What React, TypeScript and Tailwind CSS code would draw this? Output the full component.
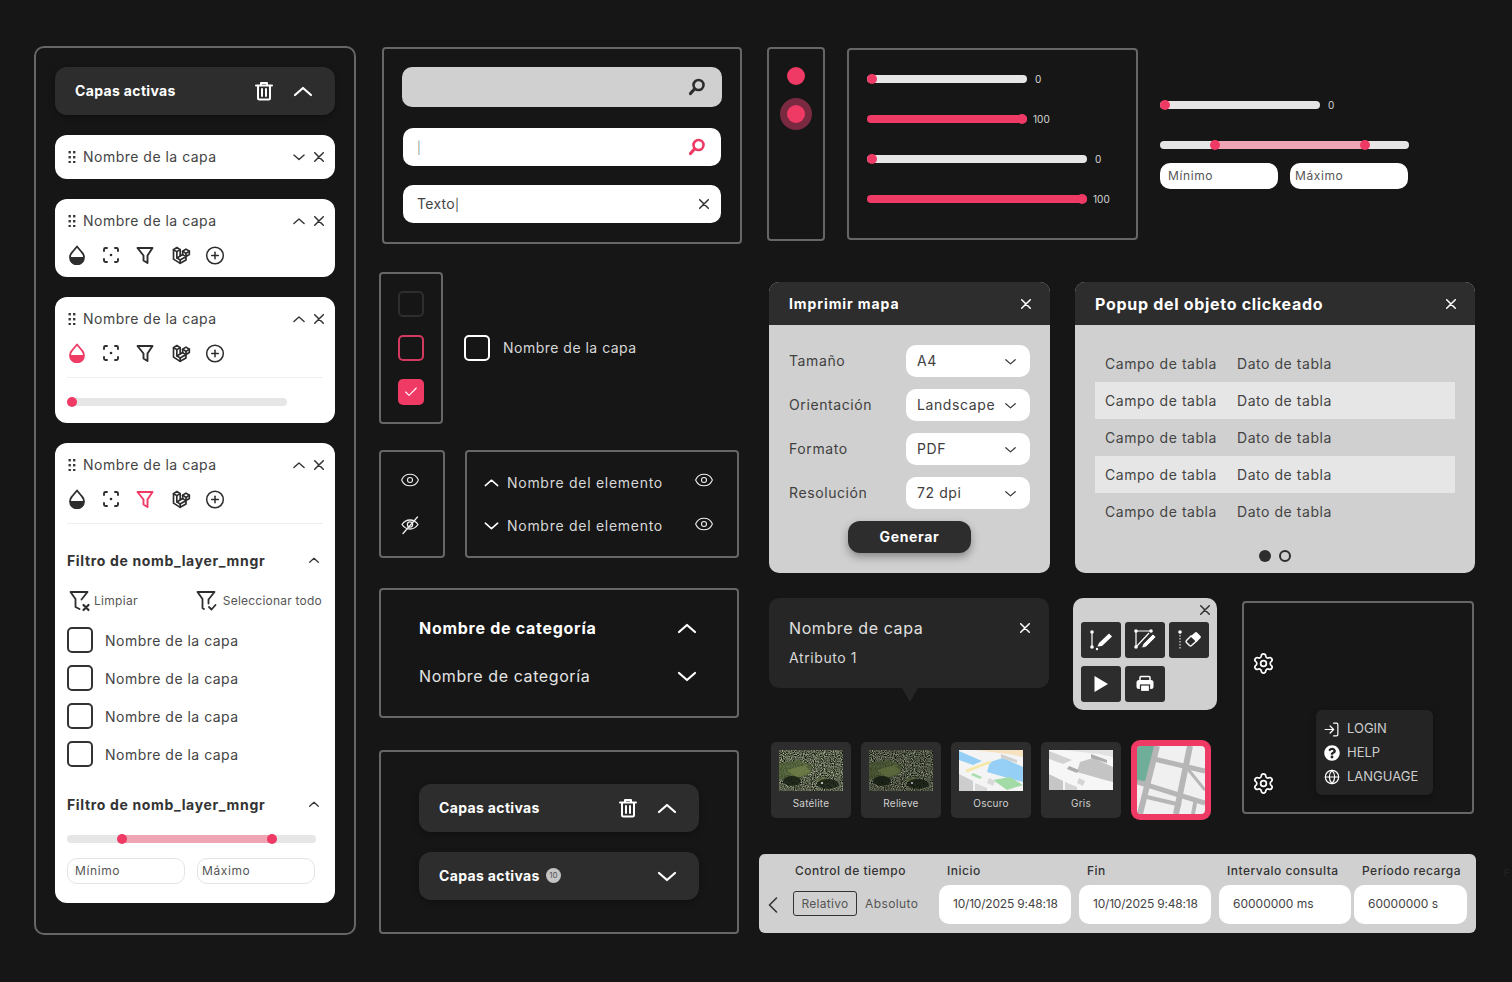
import React from "react";
import { CirclePlus, Eye, Settings, LogIn, Globe, Check } from "lucide-react";
import { TbBrandLaravel } from "react-icons/tb";
import { FaQuestionCircle } from "react-icons/fa";

const Frame = ({ className = "", children }: { className?: string; children?: React.ReactNode }) => (
  <div className={`border-2 border-[#666666] rounded-[4px] shrink-0 ${className}`}>{children}</div>
);

const CloseX = ({ size = 10, color = "#333333", sw = 1.5 }: { size?: number; color?: string; sw?: number }) => (
  <svg width={size} height={size} viewBox={`0 0 ${size} ${size}`} fill="none" stroke={color} strokeWidth={sw} strokeLinecap="round" className="shrink-0">
    <path d={`M0.7 0.7L${size - 0.7} ${size - 0.7}M${size - 0.7} 0.7L0.7 ${size - 0.7}`} />
  </svg>
);
const Trash = () => (
  <svg width="20" height="20" viewBox="0 0 20 20" fill="none" stroke="white" strokeWidth="2" strokeLinecap="round" strokeLinejoin="round">
    <path d="M2 4.5h16M7 4.5V2h6v2.5M4 4.5V17a1.5 1.5 0 0 0 1.5 1.5h9A1.5 1.5 0 0 0 16 17V4.5M8 8v7M12 8v7" />
  </svg>
);
const Chev = ({ up, size = 22, color = "white", sw = 2.2 }: { up?: boolean; size?: number; color?: string; sw?: number }) => (
  <svg width={size} height={size} viewBox="0 0 22 22" fill="none" stroke={color} strokeWidth={sw} strokeLinecap="round" strokeLinejoin="round" className="shrink-0">
    {up ? <path d="M3 15l8-7 8 7" /> : <path d="M3 8l8 7 8-7" />}
  </svg>
);
const Grip = () => (
  <svg width="8" height="12" viewBox="0 0 8 12" fill="#3a3a3a">
    {[1, 6, 11].map((y) => (
      <React.Fragment key={y}>
        <rect x="0.5" y={y - 1} width="2.4" height="2.4" />
        <rect x="5" y={y - 1} width="2.4" height="2.4" />
      </React.Fragment>
    ))}
  </svg>
);
const Drop = ({ color = "#2d2d2d" }: { color?: string }) => (
  <svg width="18" height="20" viewBox="0 0 18 20" fill="none">
    <path d="M9 1.5l5 6A7 7 0 1 1 4 7.5z" stroke={color} strokeWidth="1.8" strokeLinejoin="round" />
    <path d="M2 12h14a7 7 0 0 1-14 0z" fill={color} />
  </svg>
);
const FocusIcon = () => (
  <svg width="18" height="18" viewBox="0 0 18 18" fill="none" stroke="#2d2d2d" strokeWidth="1.9" strokeLinecap="round">
    <path d="M2 5V3.5A1.5 1.5 0 0 1 3.5 2H5M13 2h1.5A1.5 1.5 0 0 1 16 3.5V5M16 13v1.5a1.5 1.5 0 0 1-1.5 1.5H13M5 16H3.5A1.5 1.5 0 0 1 2 14.5V13" />
    <circle cx="9" cy="9" r="1.3" fill="#2d2d2d" stroke="none" />
  </svg>
);
const Funnel = ({ color = "#2d2d2d", size = 18 }: { color?: string; size?: number }) => (
  <svg width={size} height={size} viewBox="0 0 18 18" fill="none" stroke={color} strokeWidth="1.9" strokeLinejoin="round">
    <path d="M1.5 2h15l-5 7.5V17l-4-2.5v-5z" />
  </svg>
);
const FilterX = () => (
  <svg width="22" height="22" viewBox="0 0 22 22" fill="none" stroke="#2d2d2d" strokeWidth="1.8" strokeLinejoin="round" strokeLinecap="round" className="shrink-0">
    <path d="M1.5 2h17l-6 7.5M6.5 9L1.5 2M6.5 9v8l4 2" />
    <path d="M14.5 15l5 5M19.5 15l-5 5" strokeWidth="2.2" />
  </svg>
);
const FilterCheck = () => (
  <svg width="22" height="22" viewBox="0 0 22 22" fill="none" stroke="#2d2d2d" strokeWidth="1.8" strokeLinejoin="round" strokeLinecap="round" className="shrink-0">
    <path d="M1.5 2h17l-6 7.5v4M6.5 9L1.5 2M6.5 9v9l1.5 1" />
    <path d="M13 17l2.5 2.5 4-4.5" />
  </svg>
);
const Toolbar = ({ dropColor, funnelColor }: { dropColor?: string; funnelColor?: string }) => (
  <div className="flex items-center h-5 pl-[13px]">
    <div className="w-[18px] flex justify-center"><Drop color={dropColor} /></div>
    <div className="w-[18px] ml-[16px] flex justify-center"><FocusIcon /></div>
    <div className="w-[18px] ml-[16px] flex justify-center"><Funnel color={funnelColor} /></div>
    <div className="w-[20px] ml-[17px] flex justify-center"><TbBrandLaravel size={22} color="#2d2d2d" /></div>
    <div className="w-[20px] ml-[14px] flex justify-center"><CirclePlus size={21} color="#2d2d2d" strokeWidth={1.8} /></div>
  </div>
);
const CardHead = ({ open }: { open?: boolean }) => (
  <div className="flex items-center h-[44px] pl-[13px] pr-[11px]">
    <Grip />
    <span className="ml-[7px] text-[14px] text-[#444444] flex-1 tracking-[0.49px] -translate-y-px">Nombre de la capa</span>
    <Chev up={open} size={14} color="#333333" sw={2.2} />
    <div className="ml-[8px]"><CloseX /></div>
  </div>
);
const Slider = ({ w, value, full }: { w: string; value: string; full?: boolean }) => (
  <div className="flex items-center h-[10px]">
    <div className={`relative h-2 rounded-full ${w} ${full ? "bg-[#ee3a64]" : "bg-[#e6e6e6]"}`}>
      <div className={`absolute top-[-1px] size-[10px] rounded-full bg-[#ee3a64] ${full ? "right-0" : "left-0"}`} />
    </div>
    <span className={`text-[10px] text-[#d8d8d8] tracking-normal ${full ? "ml-[6px]" : "ml-[8px]"}`}>{value}</span>
  </div>
);
const Range = ({ w, a, b }: { w: string; a: string; b: string }) => (
  <div className={`relative h-2 rounded-full bg-[#e6e6e6] ${w}`}>
    <div className={`absolute top-0 h-2 bg-[#eea6b5] ${a} ${b}`} />
    <div className={`absolute top-[-1px] size-[10px] -ml-[5px] rounded-full bg-[#ee3a64] ${a}`} />
    <div className={`absolute top-[-1px] size-[10px] -mr-[5px] rounded-full bg-[#ee3a64] ${b}`} />
  </div>
);
const Box = ({ className = "" }: { className?: string }) => <div className={`size-[26px] rounded-[5px] border-2 shrink-0 ${className}`} />;
const Magnifier = ({ color }: { color: string }) => (
  <svg width="18" height="18" viewBox="0 0 18 18" fill="none" stroke={color} strokeLinecap="round" className="shrink-0">
    <circle cx="10.5" cy="7" r="5" strokeWidth="2.6" />
    <path d="M6.5 11l-4 4.5" strokeWidth="3.2" />
  </svg>
);
const EyeOff = () => (
  <svg width="20" height="20" viewBox="0 0 20 20" fill="none" stroke="#eeeeee" strokeWidth="1.3" strokeLinecap="round">
    <path d="M2 9.5C4 6.5 7 5 10 5s6 1.5 8 4.5c-2 3-5 4.5-8 4.5s-6-1.5-8-4.5z" />
    <circle cx="10" cy="9.5" r="2.6" />
    <path d="M3 18.5L17.5 2" />
  </svg>
);
const DarkHeader = ({ badge }: { badge?: boolean }) => (
  <div className="flex items-center h-12 w-[280px] rounded-xl bg-[#2d2d2d] shadow-[0_2px_6px_rgba(0,0,0,0.3)] pl-5 pr-[21px] text-white">
    <span className="text-[14px] font-bold tracking-[0.35px] -translate-y-px">Capas activas</span>
    {badge ? (
      <>
        <span className="ml-[6px] size-[15px] rounded-full bg-[#c4c4c4] text-[#555555] text-[8px] flex items-center justify-center tracking-normal -translate-y-px">10</span>
        <div className="ml-auto"><Chev /></div>
      </>
    ) : (
      <>
        <div className="ml-auto"><Trash /></div>
        <div className="ml-[18px]"><Chev up /></div>
      </>
    )}
  </div>
);
const SelectRow = ({ label, value, mt = "mt-3" }: { label: string; value: string; mt?: string }) => (
  <div className={`flex items-center h-8 ${mt}`}>
    <span className="w-[117px] text-[14px] text-[#404040] -translate-y-px">{label}</span>
    <div className="w-[124px] h-8 rounded-[10px] bg-white flex items-center pl-[11px] pr-[13px] text-[14px] text-[#404040]">
      <span className="flex-1 -translate-y-px">{value}</span>
      <Chev size={13} color="#333333" sw={2} />
    </div>
  </div>
);
const Row = ({ shaded }: { shaded?: boolean }) => (
  <div className={`flex items-center h-[37px] pl-[10px] text-[14px] text-[#444444] tracking-[0.55px] ${shaded ? "bg-[#e6e6e6]" : ""}`}>
    <span className="w-[132px]">Campo de tabla</span>
    <span>Dato de tabla</span>
  </div>
);
const ToolBtn = ({ children }: { children: React.ReactNode }) => (
  <div className="w-10 h-9 rounded-[3px] bg-[#2d2d2d] flex items-center justify-center">{children}</div>
);

const Satellite = ({ id, dim }: { id: string; dim?: boolean }) => (
  <svg width="64" height="41" viewBox="0 0 64 41">
    <defs>
      <filter id={id} x="0" y="0" width="100%" height="100%" colorInterpolationFilters="sRGB">
        <feTurbulence type="fractalNoise" baseFrequency="0.9" numOctaves="2" seed="4" />
        <feColorMatrix type="matrix" values="1.1 0 0 0 -0.2  1.15 0 0 0 -0.2  1 0 0 0 -0.2  0 0 0 0 1" />
      </filter>
    </defs>
    <rect width="64" height="41" fill="#54604a" filter={`url(#${id})`} />
    <path d="M0 13l20-3 14 6-6 10-28 3z" fill="#4f5f33" opacity="0.7" />
    <path d="M8 20l18-5 6 7-14 6z" fill="#76854c" opacity="0.65" />
    <path d="M36 30l8-3 6 3-6 3z" fill="#5d6c3c" opacity="0.7" />
    <ellipse cx="13" cy="31" rx="9" ry="5" fill="#141c10" opacity="0.85" />
    <ellipse cx="49" cy="34" rx="11" ry="5" fill="#141c10" opacity="0.8" />
    <circle cx="43" cy="33" r="1" fill="#e8e8e8" />
    {dim ? <rect width="64" height="41" fill="#000000" opacity="0.14" /> : null}
  </svg>
);
const Oscuro = () => (
  <svg width="64" height="41" viewBox="0 0 64 41">
    <rect width="64" height="41" fill="#f4f4f4" />
    <path d="M0 1L23 11l-9 4-14-5z" fill="#95cff5" />
    <path d="M31 12l13-4 20 9v15l-8-2-28-8z" fill="#95cff5" />
    <path d="M14 0h50v7l-14-3z" fill="#f6e2c0" />
    <path d="M6 20l24-9 3 1.5-25 10z" fill="#f5e8a8" />
    <path d="M34 30l17-3 13 8-16 5z" fill="#a2dba6" />
    <path d="M14 23l9 4-2 2-9-4z" fill="#a9dfae" />
    <path d="M0 24l14 7v10H0z" fill="#cdcdcd" />
    <path d="M16 33l12 5v3H16zM30 28l6 3-2 5-6-3z" fill="#d9d9d9" />
    <path d="M42 4l16 6v3l-16-5z" fill="#d0d0d0" />
  </svg>
);
const Gris = () => (
  <svg width="64" height="40" viewBox="0 0 64 40">
    <rect width="64" height="40" fill="#f6f6f6" />
    <path d="M0 1L23 10l-9 4-14-5z" fill="#d2d2d2" />
    <path d="M31 12l13-4 20 9v15l-8-2-28-8z" fill="#c4c4c4" />
    <path d="M14 0h50v7l-14-3z" fill="#e2e2e2" />
    <path d="M0 24l14 7v9H0z" fill="#c6c6c6" />
    <path d="M16 32l12 5v3H16zM30 28l6 3-2 5-6-3z" fill="#d5d5d5" />
    <path d="M42 4l16 6v3l-16-5zM20 16l10 4-2 3-10-4z" fill="#adadad" />
  </svg>
);
const Thumb = ({ label, children }: { label: string; children: React.ReactNode }) => (
  <div className="w-20 h-[76px] rounded-[5px] bg-[#2d2d2d] flex flex-col items-center pt-2 shrink-0">
    <div className="h-[41px] w-16 overflow-hidden">{children}</div>
    <span className="mt-[5px] text-[10px] text-[#cfcfcf] tracking-[0.2px]">{label}</span>
  </div>
);
const TimeField = ({ label, value, w, ml, lp = "pl-2", ip = "pl-[14px]", tv = "tracking-[-0.2px]" }: { label: string; value: string; w: string; ml: string; lp?: string; ip?: string; tv?: string }) => (
  <div className={`flex flex-col shrink-0 ${w} ${ml}`}>
    <span className={`h-[16px] text-[12px] font-medium leading-[16px] text-[#333333] tracking-[0.5px] whitespace-nowrap ${lp}`}>{label}</span>
    <div className={`mt-[6px] h-[39px] rounded-[10px] bg-white flex items-center text-[12px] text-[#444444] whitespace-nowrap ${tv} ${ip}`}>
      <span className="-translate-y-px">{value}</span>
    </div>
  </div>
);

export default function App() {
  return (
    <div className="relative w-[1512px] h-[982px] overflow-hidden bg-[#161616] flex items-start font-['Inter',sans-serif] tracking-[0.6px]">
      {/* Column 1 */}
      <div className="ml-[34px] mt-[46px] w-[322px] h-[889px] shrink-0 border-2 border-[#666666] rounded-[10px] pt-[19px] pl-[19px]">
        <DarkHeader />
        <div className="mt-5 w-[280px] h-[44px] rounded-xl bg-white"><CardHead /></div>
        <div className="mt-5 w-[280px] h-[78px] rounded-xl bg-white">
          <CardHead open />
          <div className="mt-[2px]"><Toolbar /></div>
        </div>
        <div className="mt-5 w-[280px] h-[126px] rounded-xl bg-white">
          <CardHead open />
          <div className="mt-[2px]"><Toolbar dropColor="#ee3a64" /></div>
          <div className="mt-[14px] mx-3 h-px bg-[#eeeeee]" />
          <div className="mt-[20px] ml-3 w-[220px] h-2 rounded-full bg-[#e6e6e6] relative">
            <div className="absolute top-[-1px] left-0 size-[10px] rounded-full bg-[#ee3a64]" />
          </div>
        </div>
        <div className="mt-5 w-[280px] h-[460px] rounded-xl bg-white">
          <CardHead open />
          <div className="mt-[2px]"><Toolbar funnelColor="#ee3a64" /></div>
          <div className="mt-[14px] mx-3 h-px bg-[#eeeeee]" />
          <div className="mt-[26px] ml-3 flex items-center h-5 pr-[15px]">
            <span className="text-[14px] font-bold text-[#333333] tracking-[0.65px] flex-1">Filtro de nomb_layer_mngr</span>
            <Chev up size={12} color="#333333" sw={2.4} />
          </div>
          <div className="mt-[21px] ml-[14px] flex items-center h-5 pr-[13px]">
            <FilterX />
            <span className="ml-[3px] text-[12px] text-[#555555] tracking-[0.3px]">Limpiar</span>
            <div className="ml-auto"><FilterCheck /></div>
            <span className="ml-[5px] text-[12px] text-[#555555] tracking-[0.22px]">Seleccionar todo</span>
          </div>
          {[0, 1, 2, 3].map((i) => (
            <div key={i} className={`ml-3 flex items-center h-[26px] ${i === 0 ? "mt-[16px]" : "mt-3"}`}>
              <Box className="border-[#333333]" />
              <span className="ml-[12px] text-[14px] text-[#444444] tracking-[0.49px]">Nombre de la capa</span>
            </div>
          ))}
          <div className="mt-[27px] ml-3 flex items-center h-5 pr-[15px]">
            <span className="text-[14px] font-bold text-[#333333] tracking-[0.65px] flex-1">Filtro de nomb_layer_mngr</span>
            <Chev up size={12} color="#333333" sw={2.4} />
          </div>
          <div className="mt-[21px] ml-3"><Range w="w-[249px]" a="left-[55px]" b="right-[44px]" /></div>
          <div className="mt-[15px] ml-3 flex">
            <div className="w-[118px] h-[26px] rounded-[10px] border border-[#e4e4e4] flex items-center pl-[7px] text-[12px] text-[#555555]">Mínimo</div>
            <div className="ml-3 w-[118px] h-[26px] rounded-[10px] border border-[#e4e4e4] flex items-center pl-[4px] text-[12px] text-[#555555]">Máximo</div>
          </div>
        </div>
      </div>

      {/* Column 2 */}
      <div className="ml-[23px] mt-[47px] w-[363px] shrink-0 flex flex-col">
        <Frame className="ml-[3px] w-[360px] h-[197px] pl-[18px] pt-[18px]">
          <div className="w-[320px] h-10 rounded-[10px] bg-[#d0d0d0] flex items-center justify-end pr-4"><Magnifier color="#2d2d2d" /></div>
          <div className="mt-[21px] ml-px w-[318px] h-[38px] rounded-[10px] bg-white flex items-center pl-[14px] pr-[15px] text-[12px] text-[#777777]">
            <span className="flex-1 font-light translate-y-px">|</span><Magnifier color="#ee3a64" />
          </div>
          <div className="mt-[19px] ml-px w-[318px] h-[38px] rounded-[10px] bg-white flex items-center pl-[14px] pr-3 text-[14px] text-[#444444]">
            <span className="flex-1 tracking-[0.3px] -translate-y-px">Texto<span className="text-[12px]">|</span></span><CloseX />
          </div>
        </Frame>
        <div className="mt-[28px] flex items-center">
          <Frame className="w-[64px] h-[152px] pl-[17px] pt-[17px]">
            <Box className="border-[#2e2e2e]" />
            <Box className="mt-[18px] border-[#d23a60]" />
            <div className="mt-[18px] size-[26px] rounded-[5px] bg-[#ee3a64] flex items-center justify-center"><Check size={16} color="white" strokeWidth={1.6} /></div>
          </Frame>
          <Box className="ml-[21px] border-white" />
          <span className="ml-[13px] text-[14px] text-[#d8d8d8] tracking-[0.49px] -translate-y-px">Nombre de la capa</span>
        </div>
        <div className="mt-[26px] flex">
          <Frame className="w-[66px] h-[108px] flex flex-col items-center pt-[18px] pr-[4px]">
            <Eye size={20} color="#eeeeee" strokeWidth={1.3} />
            <div className="mt-[25px]"><EyeOff /></div>
          </Frame>
          <Frame className="ml-[20px] w-[274px] h-[108px] pl-[16px] pr-[23px] pt-[19px]">
            <div className="flex items-center h-5">
              <div className="translate-y-px"><Chev up size={17} sw={2} /></div>
              <span className="ml-[7px] flex-1 text-[14px] text-[#d8d8d8] tracking-[0.72px] translate-y-px">Nombre del elemento</span>
              <Eye size={20} color="#eeeeee" strokeWidth={1.3} className="-translate-y-px" />
            </div>
            <div className="mt-[23px] flex items-center h-5">
              <div className="translate-y-px"><Chev size={17} sw={2} /></div>
              <span className="ml-[7px] flex-1 text-[14px] text-[#d8d8d8] tracking-[0.72px] translate-y-px">Nombre del elemento</span>
              <Eye size={20} color="#eeeeee" strokeWidth={1.3} />
            </div>
          </Frame>
        </div>
        <Frame className="mt-[30px] w-[360px] h-[130px] pl-[38px] pr-[39px] pt-[28px]">
          <div className="flex items-center h-5 text-white">
            <span className="flex-1 text-[16px] font-bold tracking-[0.72px]">Nombre de categoría</span>
            <Chev up />
          </div>
          <div className="mt-[28px] flex items-center h-5">
            <span className="flex-1 text-[16px] text-[#e4e4e4] tracking-[0.6px]">Nombre de categoría</span>
            <Chev />
          </div>
        </Frame>
        <Frame className="mt-[32px] w-[360px] h-[184px] pl-[38px] pt-[32px]">
          <DarkHeader />
          <div className="mt-5"><DarkHeader badge /></div>
        </Frame>
      </div>

      {/* Column 3 */}
      <div className="ml-[17px] mt-[47px] w-[717px] shrink-0 flex flex-col">
        <div className="flex items-start h-[194px] ml-2">
          <Frame className="w-[58px] h-[194px] flex flex-col items-center pt-[18px]">
            <div className="size-[18px] rounded-full bg-[#ee3a64]" />
            <div className="mt-[13px] size-8 rounded-full bg-[#7a2a40] flex items-center justify-center">
              <div className="size-[18px] rounded-full bg-[#ee3a64]" />
            </div>
          </Frame>
          <Frame className="ml-[22px] mt-px w-[291px] h-[192px] pl-[18px] pt-[24px]">
            <Slider w="w-[160px]" value="0" />
            <div className="mt-[30px]"><Slider w="w-[160px]" value="100" full /></div>
            <div className="mt-[30px]"><Slider w="w-[220px]" value="0" /></div>
            <div className="mt-[30px]"><Slider w="w-[220px]" value="100" full /></div>
          </Frame>
          <div className="ml-[22px] mt-[53px] flex flex-col">
            <Slider w="w-[160px]" value="0" />
            <div className="mt-[31px]"><Range w="w-[249px]" a="left-[55px]" b="right-[44px]" /></div>
            <div className="mt-[14px] flex">
              <div className="w-[118px] h-[26px] rounded-[10px] bg-white flex items-center pl-2 text-[12px] text-[#555555]">Mínimo</div>
              <div className="ml-3 w-[118px] h-[26px] rounded-[10px] bg-white flex items-center pl-[5px] text-[12px] text-[#555555]">Máximo</div>
            </div>
          </div>
        </div>

        <div className="mt-[41px] ml-[10px] flex items-start">
          <div className="w-[281px] h-[291px] rounded-[10px] bg-[#d0d0d0] overflow-hidden shrink-0">
            <div className="h-[43px] bg-[#2d2d2d] flex items-center pl-5 pr-[19px] text-white">
              <span className="flex-1 text-[14px] font-bold tracking-[0.9px]">Imprimir mapa</span>
              <CloseX color="white" />
            </div>
            <div className="pl-5 pt-5">
              <SelectRow label="Tamaño" value="A4" mt="mt-0" />
              <SelectRow label="Orientación" value="Landscape" />
              <SelectRow label="Formato" value="PDF" />
              <SelectRow label="Resolución" value="72 dpi" />
            </div>
            <div className="mt-3 ml-[79px] w-[123px] h-8 rounded-xl bg-[#2d2d2d] shadow-[0_4px_8px_rgba(0,0,0,0.35)] flex items-center justify-center text-[14px] font-bold text-white tracking-[0.65px]">
              <span className="-translate-y-px">Generar</span>
            </div>
          </div>
          <div className="ml-[25px] w-[400px] h-[291px] rounded-[10px] bg-[#d0d0d0] overflow-hidden shrink-0">
            <div className="h-[43px] bg-[#2d2d2d] flex items-center pl-5 pr-[19px] text-white">
              <span className="flex-1 text-[16px] font-bold tracking-[0.7px]">Popup del objeto clickeado</span>
              <CloseX color="white" />
            </div>
            <div className="mt-[20px] mx-5">
              <Row /><Row shaded /><Row /><Row shaded /><Row />
            </div>
            <div className="mt-[20px] flex justify-center gap-2">
              <div className="size-3 rounded-full bg-[#2d2d2d]" />
              <div className="size-3 rounded-full border-2 border-[#2d2d2d]" />
            </div>
          </div>
        </div>

        <div className="mt-[25px] flex items-start">
          <div className="ml-[10px] w-[448px] shrink-0">
            <div className="flex items-start">
              <div className="relative w-[280px] h-[90px] rounded-[10px] bg-[#262626] pl-5 pt-5 shrink-0">
                <div className="flex items-center h-5 pr-[19px]">
                  <span className="flex-1 text-[16px] text-[#e0e0e0] tracking-[0.6px]">Nombre de capa</span>
                  <CloseX color="white" />
                </div>
                <div className="mt-[10px] text-[14px] text-[#d8d8d8] -translate-y-px">Atributo 1</div>
                <div className="absolute left-[133px] top-[90px] size-0 border-x-[8px] border-x-transparent border-t-[14px] border-t-[#262626]" />
              </div>
              <div className="ml-[24px] w-[144px] h-[112px] rounded-[10px] bg-[#d0d0d0] shrink-0 pl-2 pt-[7px]">
                <div className="flex justify-end pr-[7px] h-[11px]"><CloseX /></div>
                <div className="mt-[6px] flex gap-1">
                  <ToolBtn>
                    <svg width="26" height="24" viewBox="0 0 26 24" fill="none" stroke="white">
                      <path d="M4 4v15" strokeWidth="1.2" /><circle cx="4" cy="4" r="1.8" fill="white" stroke="none" /><circle cx="4" cy="19" r="1.8" fill="white" stroke="none" />
                      <circle cx="9" cy="21" r="1.2" fill="white" stroke="none" />
                      <path d="M9.5 18.5l1.5-3.5 10-9.5 3 3-10 9.5z" fill="white" stroke="none" />
                    </svg>
                  </ToolBtn>
                  <ToolBtn>
                    <svg width="26" height="24" viewBox="0 0 26 24" fill="none" stroke="white">
                      <path d="M4 3h15M4 3v16M4 19L17 5" strokeWidth="1.2" /><circle cx="4" cy="3" r="1.8" fill="white" stroke="none" /><circle cx="19" cy="3" r="1.8" fill="white" stroke="none" /><circle cx="4" cy="19" r="1.8" fill="white" stroke="none" />
                      <path d="M9.5 20l1.5-4 10-10 3 3-10 10z" fill="white" stroke="#2d2d2d" strokeWidth="0.8" />
                    </svg>
                  </ToolBtn>
                  <ToolBtn>
                    <svg width="26" height="24" viewBox="0 0 26 24" fill="none" stroke="white">
                      <path d="M4 4v17" strokeWidth="1" strokeDasharray="1.5 1.5" /><circle cx="4" cy="4" r="1.8" fill="white" stroke="none" />
                      <path d="M15 8l4-3.5a1.5 1.5 0 0 1 2 0l3.5 3.5a1.5 1.5 0 0 1 0 2l-4 4z" fill="white" stroke="none" />
                      <path d="M15 8l-4.500 4.500a1.5 1.5 0 0 0 0 2l3 3a1.5 1.5 0 0 0 2 0l5-4.500z" fill="none" strokeWidth="1.4" />
                    </svg>
                  </ToolBtn>
                </div>
                <div className="mt-2 flex gap-1">
                  <ToolBtn>
                    <svg width="16" height="20" viewBox="0 0 16 20" fill="white"><path d="M1.5 2l13.5 8-13.5 8z" /></svg>
                  </ToolBtn>
                  <ToolBtn>
                    <svg width="20" height="18" viewBox="0 0 20 18">
                      <rect x="1.5" y="5" width="17" height="9" rx="2.5" fill="white" />
                      <path d="M5 6V2.5A1 1 0 0 1 6 1.5h8a1 1 0 0 1 1 1V6" fill="none" stroke="white" strokeWidth="1.5" />
                      <rect x="5.5" y="10" width="9" height="6.5" fill="white" stroke="#2d2d2d" strokeWidth="1.2" />
                    </svg>
                  </ToolBtn>
                </div>
              </div>
            </div>
            <div className="mt-[30px] ml-[2px] flex items-center gap-[10px]">
              <Thumb label="Satélite"><Satellite id="sat1" /></Thumb>
              <Thumb label="Relieve"><Satellite id="sat2" dim /></Thumb>
              <Thumb label="Oscuro"><Oscuro /></Thumb>
              <Thumb label="Gris"><Gris /></Thumb>
              <div className="size-20 rounded-[9px] bg-[#ee3a64] p-[6px] shrink-0">
                <svg width="68" height="68" viewBox="0 0 68 68" className="rounded-[4px]">
                  <rect width="68" height="68" fill="#f0f0f0" />
                  <path d="M0 0h18l-7 35-11 2z" fill="#6fae98" />
                  <g stroke="#b6b6b6" fill="none">
                    <path d="M20 0L3 68" strokeWidth="6" />
                    <path d="M53 0L39 68" strokeWidth="6" />
                    <path d="M17 13l51 12" strokeWidth="5" />
                    <path d="M0 36l68 21" strokeWidth="5" />
                    <path d="M10 51l34 8" strokeWidth="4" />
                    <path d="M50 22l18 22" strokeWidth="3" />
                    <path d="M59 52l-3 16" strokeWidth="4" />
                  </g>
                </svg>
              </div>
            </div>
          </div>
          <Frame className="relative ml-[25px] mt-[3px] w-[232px] h-[213px] pl-[8px] pt-[49px]">
            <Settings size={23} color="white" strokeWidth={1.8} />
            <div className="mt-[97px]"><Settings size={23} color="white" strokeWidth={1.8} /></div>
            <div className="absolute left-[72px] top-[107px] w-[117px] h-[85px] rounded-[6px] bg-[#242424] shadow-[0_2px_6px_rgba(0,0,0,0.3)] pl-[7px] pt-[9px] text-[13px] text-[#cccccc] tracking-[0px]">
              <div className="flex items-center h-5"><LogIn size={17} color="white" strokeWidth={1.7} /><span className="ml-[7px]">LOGIN</span></div>
              <div className="mt-[4px] flex items-center h-5"><FaQuestionCircle size={16} color="white" className="ml-px" /><span className="ml-[7px]">HELP</span></div>
              <div className="mt-[4px] flex items-center h-5"><Globe size={16} color="white" strokeWidth={1.8} className="ml-px" /><span className="ml-[7px]">LANGUAGE</span></div>
            </div>
          </Frame>
        </div>

        <div className="mt-[34px] w-[717px] h-[79px] rounded-[6px] bg-[#d0d0d0] flex items-start pt-[9px] shrink-0">
          <div className="ml-[9px] mt-[22px] h-[39px] flex items-center w-[14px]">
            <svg width="10" height="16" viewBox="0 0 10 16" fill="none" stroke="#333333" strokeWidth="1.6" strokeLinecap="round" strokeLinejoin="round"><path d="M8.5 1L1.5 8l7 7" /></svg>
          </div>
          <div className="ml-[11px] w-[144px] flex flex-col shrink-0">
            <span className="h-[16px] ml-[2px] text-[12px] font-medium leading-[16px] text-[#333333] tracking-[0.5px] whitespace-nowrap">Control de tiempo</span>
            <div className="mt-[12px] flex items-center text-[12px] text-[#555555] tracking-[0.3px]">
              <span className="w-[64px] h-[25px] rounded-[3px] border border-[#333333] flex items-center justify-center">Relativo</span>
              <span className="ml-2 tracking-[0.4px]">Absoluto</span>
            </div>
          </div>
          <TimeField label="Inicio" value="10/10/2025 9:48:18" w="w-[132px]" ml="ml-[2px]" />
          <TimeField label="Fin" value="10/10/2025 9:48:18" w="w-[132px]" ml="ml-2" />
          <TimeField label="Intervalo consulta" value="60000000 ms" w="w-[132px]" ml="ml-2" tv="tracking-[0px]" />
          <TimeField label="Período recarga" value="60000000 s" w="w-[113px]" ml="ml-[3px]" tv="tracking-[0px]" />
        </div>
      </div>
      <span className="absolute left-[1504px] top-[866px] text-[9px] text-[#262626]">F</span>
    </div>
  );
}
